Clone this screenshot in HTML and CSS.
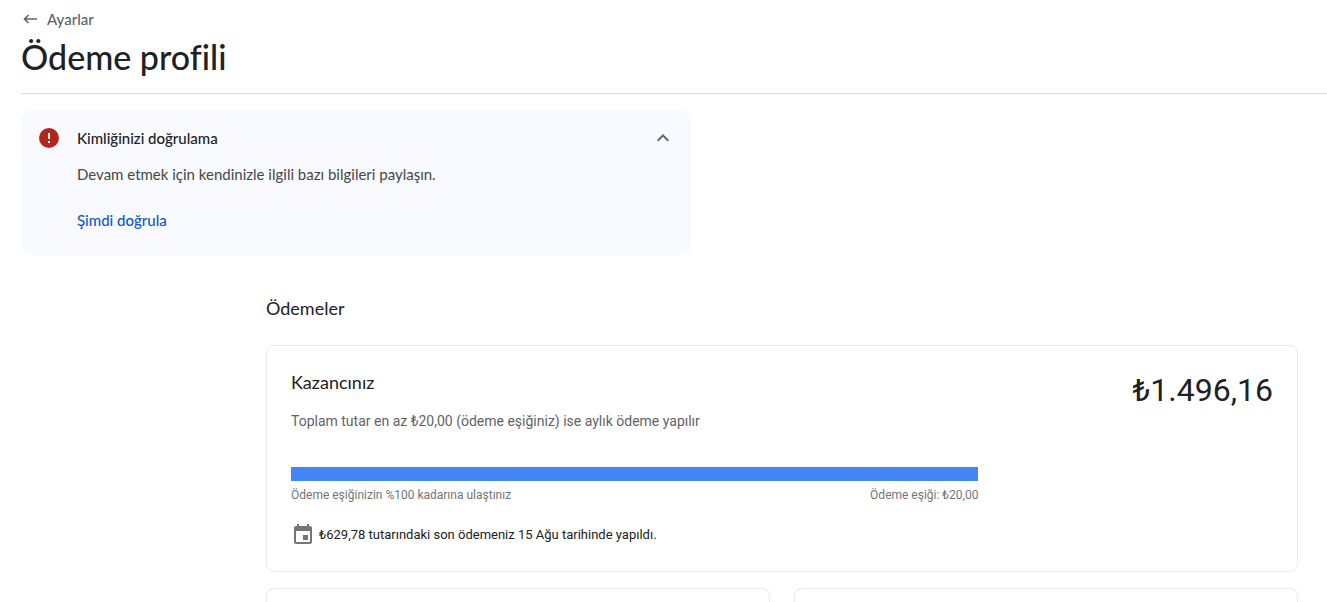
FILE: index.html
```html
<!DOCTYPE html>
<html lang="tr">
<head>
  <meta charset="UTF-8" />
  <meta name="viewport" content="width=device-width, initial-scale=1.0" />
  <title>Ödeme profili</title>
  <link rel="stylesheet" href="styles.css">
</head>
<body>
  <header class="page-header">
    <a class="back-link" href="#">
      <svg width="16" height="16" viewBox="0 0 16 16" fill="none" stroke="currentColor" stroke-width="1.6">
        <path d="M15 8H2.500M6.500 4l-4 4 4 4" />
      </svg>
      Ayarlar
    </a>
    <h1>Ödeme profili</h1>
  </header>

  <section class="notice">
    <svg class="notice-icon" width="20" height="20" viewBox="0 0 20 20">
      <circle cx="10" cy="10" r="10" fill="#b3261e" />
      <path d="M9 5h2v6H9zM9 13h2v2H9z" fill="#fff" />
    </svg>
    <div class="notice-body">
      <h2>Kimliğinizi doğrulama</h2>
      <p>Devam etmek için kendinizle ilgili bazı bilgileri paylaşın.</p>
      <a class="notice-action" href="#">Şimdi doğrula</a>
    </div>
    <button class="notice-toggle" type="button" aria-label="Daralt">
      <svg width="24" height="20" viewBox="0 2 24 20">
        <path d="M12 8l-6 6 1.410 1.410L12 10.830l4.590 4.580L18 14z" fill="currentColor" />
      </svg>
    </button>
  </section>

  <main class="payments">
    <h2>Ödemeler</h2>

    <section class="card earnings">
      <div class="earnings-info">
        <h3>Kazancınız</h3>
        <p class="earnings-text">Toplam tutar en az ₺20,00 (ödeme eşiğiniz) ise aylık ödeme yapılır</p>
        <div class="progress">
          <div class="progress-bar" style="width: 100%"></div>
        </div>
        <div class="progress-labels">
          <span>Ödeme eşiğinizin %100 kadarına ulaştınız</span>
          <span>Ödeme eşiği: ₺20,00</span>
        </div>
        <p class="last-payment">
          <svg width="24" height="24" viewBox="0 0 24 24">
            <path d="M17 12h-5v5h5v-5zM16 1v2H8V1H6v2H5c-1.110 0-2 .9-2 2v14a2 2 0 0 0 2 2h14c1.100 0 2-.9 2-2V5c0-1.100-.9-2-2-2h-1V1h-2zm3 18H5V8h14v11z" fill="currentColor" />
          </svg>
          ₺629,78 tutarındaki son ödemeniz 15 Ağu tarihinde yapıldı.
        </p>
      </div>
      <div class="amount">₺1.496,16</div>
    </section>

    <div class="card-row">
      <section class="card"></section>
      <section class="card"></section>
    </div>
  </main>
</body>
</html>
```
FILE: styles.css
```css
* {
  box-sizing: border-box;
}

body {
  margin: 0;
  height: 100vh;
  overflow: hidden;
  display: flex;
  flex-direction: column;
  font-family: Roboto, Arial, sans-serif;
  color: #202124;
  background: #fff;
}

h1, h2, h3, p {
  margin: 0;
}

.page-header {
  margin-left: 21px;
  padding-top: 9px;
  padding-bottom: 16px;
  border-bottom: 1px solid #dadce0;
}

.back-link {
  display: flex;
  align-items: center;
  gap: 9px;
  padding-left: 1px;
  font-family: Lato, sans-serif;
  font-size: 15px;
  font-weight: 500;
  line-height: 20px;
  color: #5f6368;
  text-decoration: none;
}

h1 {
  margin-top: 8px;
  font-family: Lato, sans-serif;
  font-size: 34px;
  font-weight: 500;
  line-height: 40px;
}

.notice {
  display: flex;
  width: 670px;
  max-width: 100%;
  margin: 16px 0 0 21px;
  padding: 18px 16px 26px 18px;
  border-radius: 12px;
  background: #f8faff;
}

.notice-icon {
  flex: none;
  margin-right: 18px;
}

.notice-body {
  flex: 1;
  font-family: Lato, sans-serif;
  font-size: 15px;
  line-height: 20px;
}

.notice-body h2 {
  font-size: 15px;
  font-weight: 500;
  line-height: 20px;
}

.notice-body p {
  margin: 16px 0 26px;
  color: #444746;
}

.notice-action {
  font-weight: 500;
  color: #0b57d0;
  text-decoration: none;
}

.notice-toggle {
  display: flex;
  width: 24px;
  height: 20px;
  padding: 0;
  border: none;
  background: none;
  color: #5f6368;
  cursor: pointer;
}

.payments {
  flex: 1;
  min-height: 0;
  display: flex;
  flex-direction: column;
  margin: 40px 29px 0 266px;
}

.payments h2 {
  margin-bottom: 25px;
  font-family: Lato, sans-serif;
  font-size: 18px;
  font-weight: 400;
  line-height: 24px;
}

.card {
  border: 1px solid #e8eaed;
  border-radius: 8px;
}

.earnings {
  display: flex;
  justify-content: space-between;
  padding: 24px;
}

.earnings-info {
  width: 70%;
}

.earnings h3 {
  font-family: Lato, sans-serif;
  font-size: 18px;
  font-weight: 400;
  line-height: 24px;
}

.earnings-text {
  margin-top: 17px;
  font-size: 14px;
  line-height: 20px;
  color: #5f6368;
}

.progress {
  margin-top: 36px;
  height: 14px;
  background: #e8eaed;
}

.progress-bar {
  height: 100%;
  background: #4285f4;
}

.progress-labels {
  display: flex;
  justify-content: space-between;
  margin-top: 4px;
  font-size: 12px;
  line-height: 20px;
  color: #757575;
}

.last-payment {
  display: flex;
  align-items: center;
  gap: 4px;
  margin-top: 18px;
  font-size: 13px;
  line-height: 24px;
}

.last-payment svg {
  color: #757575;
}

.amount {
  font-size: 32px;
  line-height: 40px;
}

.card-row {
  flex: 1;
  display: grid;
  grid-template-columns: 1fr 1fr;
  gap: 24px;
  margin-top: 16px;
}

.card-row .card {
  border-bottom: none;
  border-radius: 8px 8px 0 0;
}
```
